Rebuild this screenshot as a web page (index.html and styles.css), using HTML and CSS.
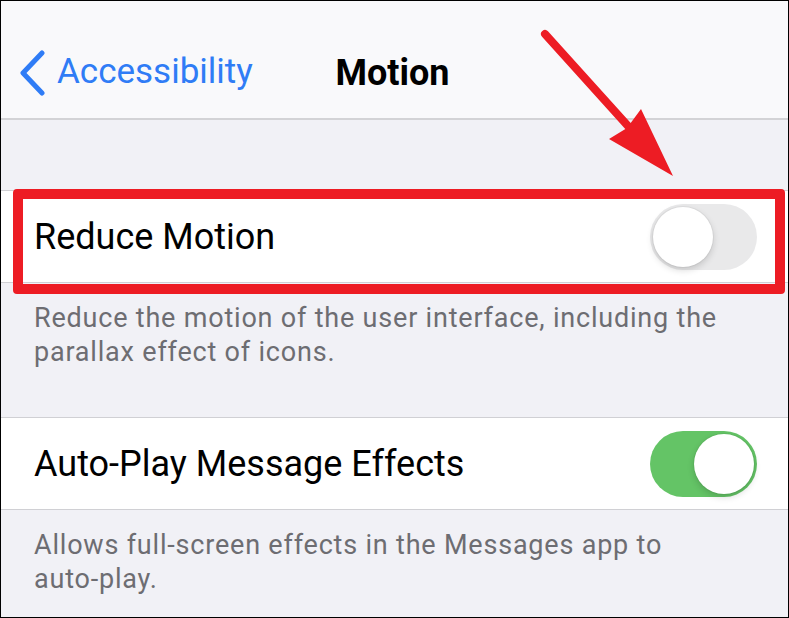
FILE: index.html
```html
<!DOCTYPE html>
<html lang="en">
<head>
    <meta charset="UTF-8">
    <meta name="viewport" content="width=device-width, initial-scale=1.0">
    <title>Motion</title>
    <link rel="stylesheet" href="styles.css">
</head>
<body>
    <div class="screen">
        <div class="nav-bar">
            <div class="nav-back">
                <svg class="chevron" width="30" height="46" viewBox="0 0 30 46">
                    <path d="M24 3 L5 23 L24 43" fill="none" stroke="#2f7cf6" stroke-width="5" stroke-linecap="round" stroke-linejoin="round"/>
                </svg>
                <span>Accessibility</span>
            </div>
            <div class="nav-title">Motion</div>
            <div></div>
        </div>

        <div class="group">
            <div class="cell">
                <span class="cell-label">Reduce Motion</span>
                <div class="switch"><div class="knob"></div></div>
            </div>
        </div>
        <div class="footer">Reduce the motion of the user interface, including the parallax effect of icons.</div>

        <div class="group">
            <div class="cell">
                <span class="cell-label">Auto-Play Message Effects</span>
                <div class="switch on"><div class="knob"></div></div>
            </div>
        </div>
        <div class="footer">Allows full-screen effects in the Messages app to <span class="nowrap">auto-play.</span></div>

        <!-- annotation overlay -->
        <div class="highlight"></div>
        <svg class="arrow" width="789" height="618" viewBox="0 0 789 618">
            <line x1="545" y1="34" x2="628" y2="126" stroke="#ed1c24" stroke-width="8" stroke-linecap="round"/>
            <polygon points="673,176 609,139 627,128 641,109" fill="#ed1c24"/>
        </svg>
    </div>
</body>
</html>
```

FILE: styles.css
```css
* {
    box-sizing: border-box;
}
body {
    margin: 0;
    padding: 0;
    font-family: Roboto, "Noto Sans", sans-serif;
    background-color: #fff;
}
.screen {
    position: relative;
    width: 789px;
    height: 618px;
    border: 1px solid #000;
    background-color: #f1f1f6;
    overflow: hidden;
}
.nav-bar {
    height: 119px;
    background-color: #f9f9fb;
    border-bottom: 2px solid #d3d3d6;
    display: grid;
    grid-template-columns: 1fr auto 1fr;
    align-items: center;
    padding-top: 26px;
}
.nav-back {
    display: flex;
    align-items: center;
    gap: 9px;
    padding-left: 17px;
    color: #2f7cf6;
    font-size: 35px;
}
.nav-back span {
    margin-top: -2px;
}
.nav-title {
    font-size: 36px;
    font-weight: 700;
    color: #000;
    margin-right: 4px;
}
.group {
    margin-top: 70px;
    background-color: #fff;
    border-top: 1px solid #d0d0d4;
    border-bottom: 1px solid #d0d0d4;
}
.footer + .group {
    margin-top: 0;
}
.cell {
    height: 91px;
    display: flex;
    align-items: center;
    justify-content: space-between;
    padding: 0 31px 0 33px;
}
.cell-label {
    font-size: 36px;
    color: #000;
}
.switch {
    width: 107px;
    height: 66px;
    border-radius: 33px;
    background-color: #e9e9ea;
    position: relative;
}
.knob {
    position: absolute;
    top: 3px;
    left: 3px;
    width: 60px;
    height: 60px;
    border-radius: 50%;
    background-color: #fff;
    box-shadow: 0 3px 7px rgba(0, 0, 0, 0.16), 0 0 0 1px rgba(0, 0, 0, 0.04);
}
.switch.on {
    background-color: #64c466;
}
.switch.on .knob {
    left: auto;
    right: 3px;
}
.footer {
    padding: 18px 40px 48px 33px;
    font-size: 27px;
    line-height: 34px;
    letter-spacing: 0.8px;
    color: #6d6d72;
}
.nowrap {
    white-space: nowrap;
}
.highlight {
    position: absolute;
    left: 12px;
    top: 188px;
    width: 772px;
    height: 105px;
    border: 10px solid #ed1c24;
    border-radius: 4px;
}
.arrow {
    position: absolute;
    left: -1px;
    top: -1px;
}
```
